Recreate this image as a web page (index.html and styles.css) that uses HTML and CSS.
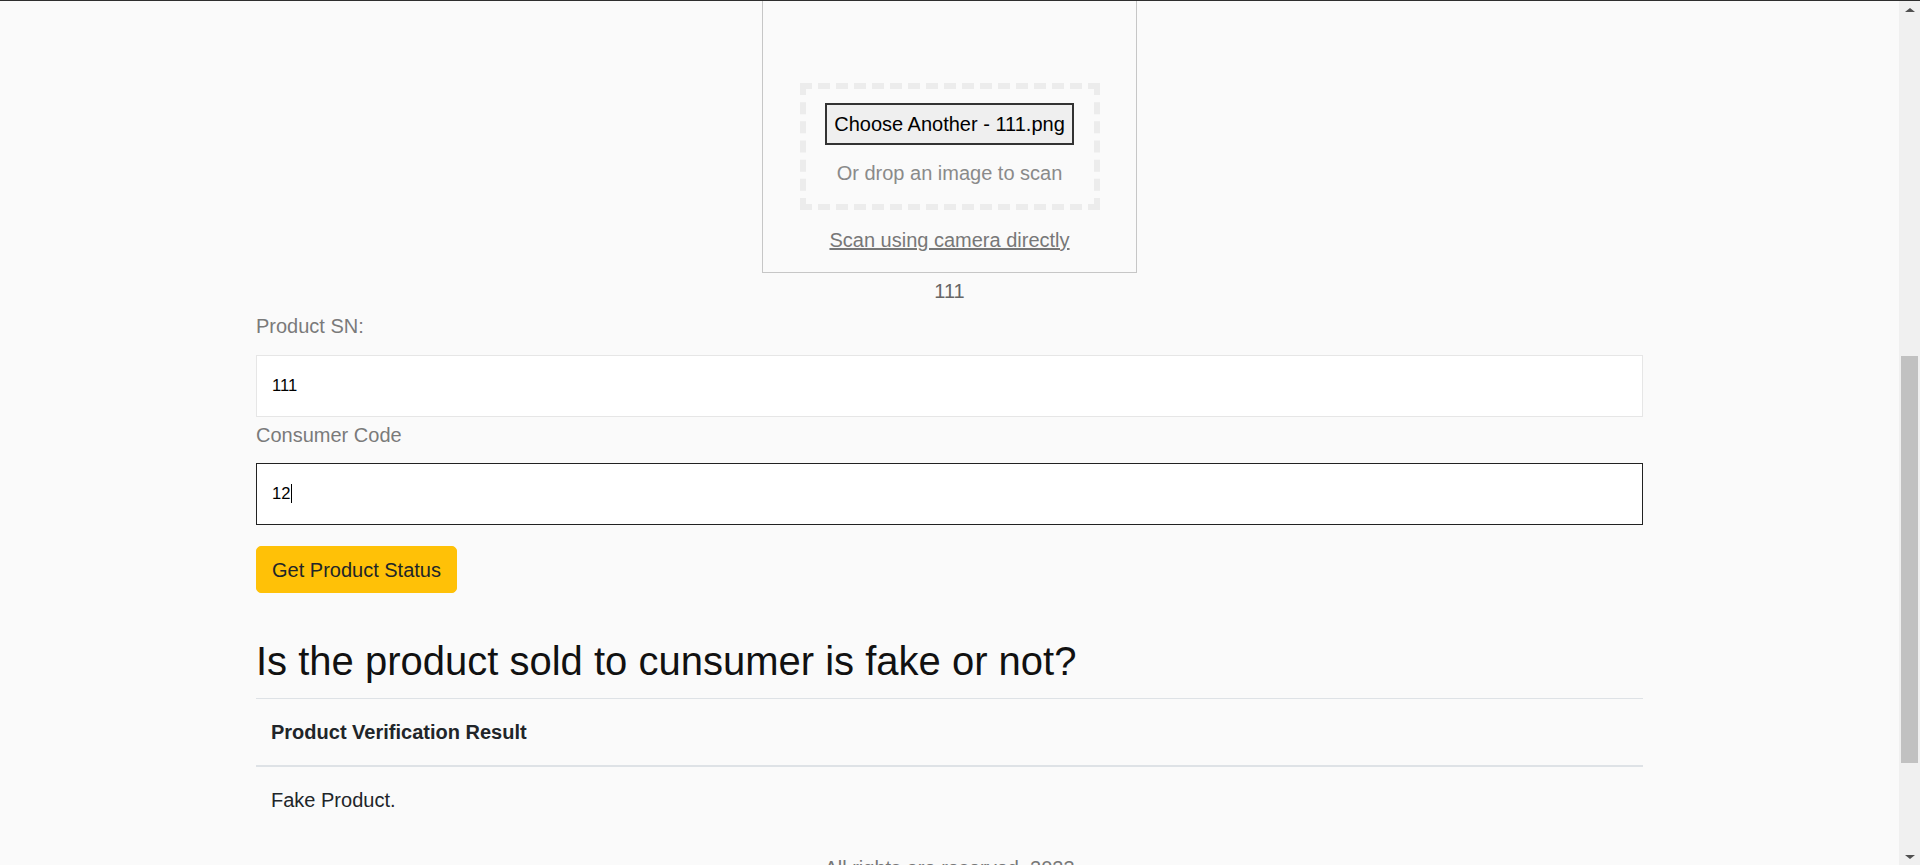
FILE: index.html
```html
<!DOCTYPE html>
<html lang="en">
<head>
<meta charset="utf-8">
<title>Product Verification</title>
<link rel="stylesheet" href="styles.css">
</head>
<body>
<div class="window">
  <main class="viewport">
    <div class="container">
      <section class="scanner">
        <div class="scanner-box">
          <div class="dropzone">
            <button class="choose-btn" type="button">Choose Another - 111.png</button>
            <p class="drop-hint">Or drop an image to scan</p>
          </div>
          <a class="camera-link" href="#">Scan using camera directly</a>
        </div>
        <p class="scan-result">111</p>
      </section>

      <form class="verify-form">
        <label class="field-label" for="sn">Product SN:</label>
        <input id="sn" class="field-input" type="text" value="111">
        <label class="field-label label-code" for="code">Consumer Code</label>
        <div class="field-wrap">
          <input id="code" class="field-input is-focused" type="text" value="12">
          <span class="caret"></span>
        </div>
        <button class="btn-status" type="button">Get Product Status</button>
      </form>

      <h2 class="result-title">Is the product sold to cunsumer is fake or not?</h2>

      <table class="result-table">
        <thead>
          <tr><th>Product Verification Result</th></tr>
        </thead>
        <tbody>
          <tr><td>Fake Product.</td></tr>
        </tbody>
      </table>

      <p class="footer-note">All rights are reserved, 2023</p>
    </div>
  </main>
  <aside class="scrollbar">
    <div class="sb-btn"><span class="arrow-up"></span></div>
    <div class="sb-track"><div class="sb-thumb"></div></div>
    <div class="sb-btn sb-btn-bottom"><span class="arrow-down"></span></div>
  </aside>
</div>
</body>
</html>
```

FILE: styles.css
```css
* { box-sizing: border-box; }

html, body {
  margin: 0;
  padding: 0;
  height: 865px;
  overflow: hidden;
}

body {
  background: #fafafa;
  font-family: "Liberation Sans", Arial, sans-serif;
  font-size: 20px;
  line-height: 30px;
  color: #212529;
}

.window {
  display: flex;
  height: 865px;
  border-top: 1px solid #2e2e2e;
}

.viewport {
  flex: 1;
  overflow: hidden;
}

.container {
  width: 1387px;
  margin: 0 auto;
}

/* scanner */
.scanner {
  display: flex;
  flex-direction: column;
  align-items: center;
}

.scanner-box {
  width: 375px;
  padding: 82px 0 17px;
  border: 1px solid #c6c6c6;
  border-top: none;
  display: flex;
  flex-direction: column;
  align-items: center;
}

.dropzone {
  width: 300px;
  height: 127px;
  border: 6px dashed #ececec;
  padding-top: 14px;
  display: flex;
  flex-direction: column;
  align-items: center;
}

.choose-btn {
  width: 249px;
  height: 42px;
  padding: 0;
  border: 2px solid #333;
  background: #efefef;
  font-family: "Liberation Sans", Arial, sans-serif;
  font-size: 20px;
  line-height: 24px;
  color: #000;
  text-align: center;
}

.drop-hint {
  margin: 13px 0 0;
  color: #8a8a8a;
  line-height: 30px;
}

.camera-link {
  margin-top: 15px;
  color: #777;
  text-decoration: underline;
  line-height: 30px;
}

.scan-result {
  margin: 3px 0 0;
  color: #666;
  line-height: 30px;
}

/* form */
.verify-form {
  display: flex;
  flex-direction: column;
  align-items: flex-start;
}

.field-label {
  margin-top: 5px;
  color: #7a7a7a;
  line-height: 30px;
}

.label-code {
  margin-top: 3px;
}

.field-input {
  display: block;
  width: 1387px;
  height: 62px;
  margin-top: 14px;
  padding: 0 15px;
  border: 1px solid #e6e6e6;
  background: #fff;
  font-family: "Liberation Sans", Arial, sans-serif;
  font-size: 16.6px;
  color: #000;
  outline: none;
}

.field-wrap {
  position: relative;
  margin-top: 13px;
}

.field-wrap .field-input {
  margin-top: 0;
}

.field-input.is-focused {
  border: 1px solid #222;
}

.caret {
  position: absolute;
  left: 35px;
  top: 21px;
  width: 1px;
  height: 19px;
  background: #000;
}

.btn-status {
  margin-top: 21px;
  height: 47px;
  padding: 0 15px;
  border: 1px solid #ffc107;
  border-radius: 5px;
  background: #ffc107;
  font-family: "Liberation Sans", Arial, sans-serif;
  font-size: 20px;
  line-height: 30px;
  color: #212529;
}

/* result */
.result-title {
  margin: 44px 0 13px;
  font-size: 40px;
  line-height: 48px;
  font-weight: 400;
  color: #111;
}

.result-table {
  width: 100%;
  border-collapse: collapse;
}

.result-table th {
  text-align: left;
  padding: 18px 15px;
  font-size: 20px;
  line-height: 30px;
  font-weight: 700;
  border-top: 1px solid #dee2e6;
  border-bottom: 2px solid #dee2e6;
}

.result-table td {
  padding: 18px 15px;
  line-height: 30px;
}

.footer-note {
  margin: 20px 0 0;
  text-align: center;
  color: #777;
  line-height: 30px;
}

/* scrollbar */
.scrollbar {
  width: 21px;
  flex: none;
  background: #f0f0f0;
  display: flex;
  flex-direction: column;
}

.sb-btn {
  height: 17px;
  display: flex;
  align-items: center;
  justify-content: center;
  flex: none;
}

.sb-track {
  flex: 1;
  padding: 0 2px;
}

.sb-thumb {
  margin-top: 338px;
  height: 407px;
  background: #c1c1c1;
}

.arrow-up {
  width: 0;
  height: 0;
  border-left: 5px solid transparent;
  border-right: 5px solid transparent;
  border-bottom: 4px solid #505050;
}

.arrow-down {
  width: 0;
  height: 0;
  border-left: 5px solid transparent;
  border-right: 5px solid transparent;
  border-top: 4px solid #505050;
}
```
